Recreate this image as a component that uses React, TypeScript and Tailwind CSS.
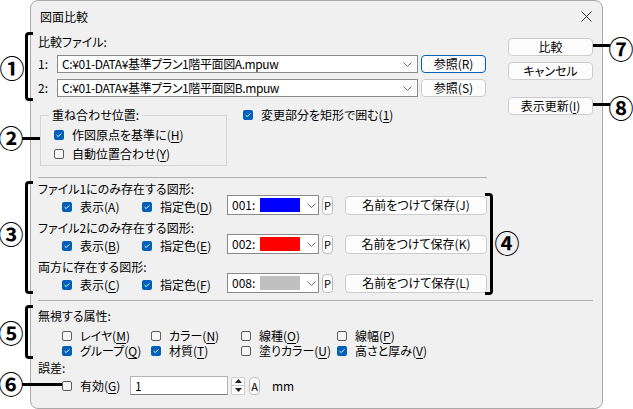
import React from 'react'

// チェックボックス（Windows 11 風）
function Check({ on }: { on?: boolean }) {
    if (on) {
        return (
            <span className="flex h-[10px] w-[10px] shrink-0 items-center justify-center rounded-[2px] bg-[#005fb8]">
                <svg width="8" height="8" viewBox="0 0 8 8">
                    <path d="M1.6 4.1 L3.2 5.6 L6.4 2.4" stroke="white" strokeWidth="1" fill="none" />
                </svg>
            </span>
        )
    }
    return <span className="h-[10px] w-[10px] shrink-0 rounded-[2px] border border-[#5c5c5c] bg-[#f6f6f6]" />
}

function Opt({ on, text, k, u = true, className = '' }: { on?: boolean; text: string; k: string; u?: boolean; className?: string }) {
    return (
        <div className={'flex items-center gap-[8px] ' + className}>
            <Check on={on} />
            <span className="whitespace-nowrap">
                {text}(<span className={u ? 'underline underline-offset-2' : ''}>{k}</span>)
            </span>
        </div>
    )
}

function Btn({ children, className = '' }: { children: React.ReactNode; className?: string }) {
    return (
        <div className={'flex shrink-0 items-center justify-center rounded-[4px] border bg-[#fdfdfd] whitespace-nowrap ' + className}>
            {children}
        </div>
    )
}

function Chevron() {
    return (
        <svg width="9" height="5" viewBox="0 0 9 5" className="shrink-0">
            <path d="M0.5 0.5 L4.5 4.5 L8.5 0.5" stroke="#6a6a6a" strokeWidth="1" fill="none" />
        </svg>
    )
}

const shapeRows = [
    { title: 'ファイル1にのみ存在する図形:', a: 'A', ua: false, b: 'D', code: '001:', swatch: 'bg-[#0000ff]', save: 'J' },
    { title: 'ファイル2にのみ存在する図形:', a: 'B', ua: true, b: 'E', code: '002:', swatch: 'bg-[#ff0000]', save: 'K' },
    { title: '両方に存在する図形:', a: 'C', ua: true, b: 'F', code: '008:', swatch: 'bg-[#c0c0c0]', save: 'L' },
]

const ignoreRows: [string, string, boolean][][] = [
    [['レイヤ', 'M', false], ['カラー', 'N', false], ['線種', 'O', false], ['線幅', 'P', false]],
    [['グループ', 'Q', true], ['材質', 'T', true], ['塗りカラー', 'U', false], ['高さと厚み', 'V', true]],
]
const colW = ['w-[89px]', 'w-[90px]', 'w-[96px]', '']

function Marker({ n, className }: { n: string; className: string }) {
    return (
        <span className={'absolute flex h-[24px] w-[22px] items-center justify-center text-[25px] font-bold leading-none ' + className}>
            {n}
        </span>
    )
}

export default function App() {
    return (
        <div className="relative flex h-[409px] w-[633px] overflow-hidden bg-white text-[12px] leading-[14px] text-black font-['Noto_Sans_CJK_JP','Noto_Sans',sans-serif] [font-feature-settings:'palt']">
            <div className="ml-[30px] flex h-[409px] w-[573px] flex-col rounded-[8px] border border-[#a9a9a9] bg-[#f0f0f0]">
                {/* タイトルバー */}
                <div className="flex h-[31px] shrink-0 items-center justify-between pl-[9px] pr-[10px]">
                    <span>図面比較</span>
                    <svg width="11" height="11" viewBox="0 0 11 11">
                        <path d="M0.5 0.5 L10.5 10.5 M10.5 0.5 L0.5 10.5" stroke="#333" strokeWidth="1" />
                    </svg>
                </div>

                <div className="flex flex-1 flex-col pl-[7px] pr-[9px]">
                    <div className="flex gap-[21px]">
                        {/* 左側 */}
                        <div className="flex w-[449px] flex-col">
                            <div className="mt-[3px] h-[14px]">比較ファイル:</div>
                            {[
                                { n: '1:', path: 'C:¥01-DATA¥基準プラン1階平面図A.mpuw', k: 'R', focus: true },
                                { n: '2:', path: 'C:¥01-DATA¥基準プラン1階平面図B.mpuw', k: 'S', focus: false },
                            ].map((r) => (
                                <div key={r.n} className="mt-[6px] flex h-[18px] items-center">
                                    <span className="w-[19px]">{r.n}</span>
                                    <div className="flex h-[18px] w-[361px] items-center justify-between border border-[#8a8a8a] bg-white pl-[4px] pr-[5px]">
                                        <span className="whitespace-nowrap tracking-[-0.4px]">{r.path}</span>
                                        <Chevron />
                                    </div>
                                    <Btn className={'ml-[3px] h-[18px] w-[65px] ' + (r.focus ? 'border-[#005fb8]' : 'border-[#cdcdcd]')}>
                                        参照({r.k})
                                    </Btn>
                                </div>
                            ))}

                            <div className="ml-[2px] mt-[11px] flex items-start gap-[16px]">
                                <fieldset className="w-[187px] border border-[#d4d4d4] pb-[3px] pl-[13px]">
                                    <legend className="ml-[-5px] h-[14px] px-[3px]">重ね合わせ位置:</legend>
                                    <Opt on text="作図原点を基準に" k="H" className="mt-[5px] h-[16px]" />
                                    <Opt text="自動位置合わせ" k="Y" className="mt-[3px] h-[16px]" />
                                </fieldset>
                                <Opt on text="変更部分を矩形で囲む" k="1" className="h-[14px]" />
                            </div>

                            <div className="mt-[11px] h-px bg-[#b0b0b0]" />

                            {shapeRows.map((r, i) => (
                                <div key={r.code} className="flex flex-col">
                                    <div className={(i === 0 ? 'mt-[4px]' : 'mt-[6px]') + ' h-[13px] leading-[13px]'}>{r.title}</div>
                                    <div className="flex h-[20px] items-center pl-[24px]">
                                        <Opt on text="表示" k={r.a} u={r.ua} className="w-[80px] pt-[3px]" />
                                        <Opt on text="指定色" k={r.b} className="w-[85px] pt-[3px]" />
                                        <div className="flex h-[20px] w-[92px] items-center border border-[#8a8a8a] bg-white pl-[4px]">
                                            <span className="w-[28px]">{r.code}</span>
                                            <span className={'h-[14px] w-[40px] ' + r.swatch} />
                                            <span className="ml-[7px]"><Chevron /></span>
                                        </div>
                                        <Btn className="ml-[3px] h-[19px] w-[11px] rounded-[3px] border-[#bdbdbd] text-[11px]">P</Btn>
                                        <Btn className="ml-[12px] h-[19px] w-[142px] border-[#cdcdcd]">名前をつけて保存({r.save})</Btn>
                                    </div>
                                </div>
                            ))}
                        </div>

                        {/* 右側ボタン */}
                        <div className="flex w-[85px] flex-col pt-[6px]">
                            <Btn className="h-[18px] border-[#cdcdcd]">比較</Btn>
                            <Btn className="mt-[6px] h-[18px] border-[#cdcdcd]">キャンセル</Btn>
                            <Btn className="mt-[17px] h-[18px] border-[#cdcdcd]">
                                <span>表示更新(<span className="underline underline-offset-2">I</span>)</span>
                            </Btn>
                        </div>
                    </div>

                    <div className="mt-[7px] h-px bg-[#b0b0b0]" />

                    <div className="mt-[8px] h-[13px] leading-[13px]">無視する属性:</div>
                    {ignoreRows.map((row, i) => (
                        <div key={i} className={(i === 0 ? 'mt-[6px]' : '') + ' flex h-[15px] items-center pl-[24px] leading-[13px]'}>
                            {row.map(([t, k, on], j) => (
                                <Opt key={k} on={on} text={t} k={k} className={colW[j]} />
                            ))}
                        </div>
                    ))}

                    <div className="mt-[3px] h-[13px] leading-[13px]">誤差:</div>
                    <div className="mt-[2px] flex h-[19px] items-center pl-[24px]">
                        <Opt text="有効" k="G" className="w-[68px]" />
                        <div className="flex h-[19px] w-[98px] items-center border border-[#b4b4b4] border-b-[#7a7a7a] bg-white pl-[4px]">1</div>
                        <div className="ml-[3px] flex h-[18px] w-[14px] flex-col">
                            <div className="flex h-[9px] items-center justify-center rounded-t-[2px] border border-[#cdcdcd] bg-[#fdfdfd]">
                                <svg width="7" height="4" viewBox="0 0 7 4"><path d="M0 4 L3.5 0 L7 4 Z" fill="#222" /></svg>
                            </div>
                            <div className="flex h-[9px] items-center justify-center rounded-b-[2px] border border-t-0 border-[#cdcdcd] bg-[#fdfdfd]">
                                <svg width="7" height="4" viewBox="0 0 7 4"><path d="M0 0 L3.5 4 L7 0 Z" fill="#222" /></svg>
                            </div>
                        </div>
                        <Btn className="ml-[4px] h-[18px] w-[11px] rounded-[3px] border-[#bdbdbd] text-[11px]">A</Btn>
                        <span className="ml-[12px]">mm</span>
                    </div>
                </div>
            </div>

            {/* 注記 */}
            <div className="absolute left-[25px] top-[32px] h-[69px] w-[8px] rounded-l-[4px] border-y-[3px] border-l-[3px] border-black" />
            <div className="absolute left-[25px] top-[181px] h-[113px] w-[8px] rounded-l-[4px] border-y-[3px] border-l-[3px] border-black" />
            <div className="absolute left-[25px] top-[305px] h-[54px] w-[8px] rounded-l-[4px] border-y-[3px] border-l-[3px] border-black" />
            <div className="absolute left-[485px] top-[193px] h-[102px] w-[8px] rounded-r-[4px] border-y-[3px] border-r-[3px] border-black" />
            <div className="absolute left-[22px] top-[137px] h-[3px] w-[18px] bg-black" />
            <div className="absolute left-[22px] top-[383px] h-[3px] w-[40px] bg-black" />
            <div className="absolute left-[593px] top-[44px] h-[3px] w-[17px] bg-black" />
            <div className="absolute left-[593px] top-[103px] h-[3px] w-[17px] bg-black" />

            <Marker n="①" className="left-[1px] top-[55px]" />
            <Marker n="②" className="left-[0px] top-[125px]" />
            <Marker n="③" className="left-[0px] top-[221px]" />
            <Marker n="④" className="left-[496px] top-[230px]" />
            <Marker n="⑤" className="left-[0px] top-[320px]" />
            <Marker n="⑥" className="left-[0px] top-[371px]" />
            <Marker n="⑦" className="left-[610px] top-[36px]" />
            <Marker n="⑧" className="left-[610px] top-[95px]" />
        </div>
    )
}
